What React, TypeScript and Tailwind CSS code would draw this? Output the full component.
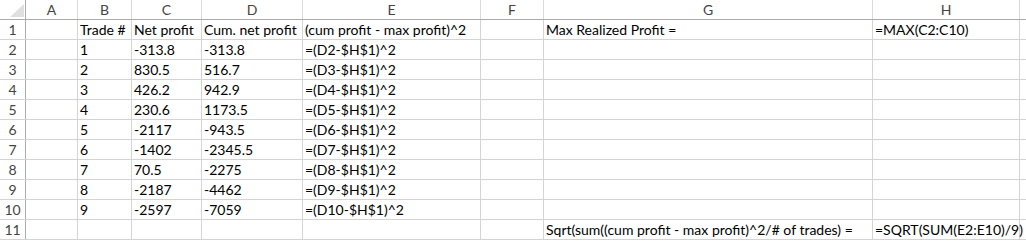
const cols = ["A", "B", "C", "D", "E", "F", "G", "H"];

// cell widths include their 1px right gridline
const widths = ["w-[52px]", "w-[54px]", "w-[70px]", "w-[101px]", "w-[178px]", "w-[63px]", "w-[329px]", "w-[147px]"];

const rows: string[][] = [
  ["", "Trade #", "Net profit", "Cum. net profit", "(cum profit - max profit)^2", "", "Max Realized Profit =", "=MAX(C2:C10)"],
  ["", "1", "-313.8", "-313.8", "=(D2-$H$1)^2", "", "", ""],
  ["", "2", "830.5", "516.7", "=(D3-$H$1)^2", "", "", ""],
  ["", "3", "426.2", "942.9", "=(D4-$H$1)^2", "", "", ""],
  ["", "4", "230.6", "1173.5", "=(D5-$H$1)^2", "", "", ""],
  ["", "5", "-2117", "-943.5", "=(D6-$H$1)^2", "", "", ""],
  ["", "6", "-1402", "-2345.5", "=(D7-$H$1)^2", "", "", ""],
  ["", "7", "70.5", "-2275", "=(D8-$H$1)^2", "", "", ""],
  ["", "8", "-2187", "-4462", "=(D9-$H$1)^2", "", "", ""],
  ["", "9", "-2597", "-7059", "=(D10-$H$1)^2", "", "", ""],
  ["", "", "", "", "", "", "Sqrt(sum((cum profit - max profit)^2/# of trades) =", "=SQRT(SUM(E2:E10)/9)"],
];

export default function App() {
  return (
    <div className="w-[1026px] h-[241px] overflow-hidden bg-white text-[14px] text-black" style={{ fontFamily: 'Lato, "Liberation Sans", Arial, sans-serif' }}>
      {/* column header */}
      <div className="flex h-[20px] border-b border-[#ababab]">
        <div className="w-[26px] shrink-0 border-r border-[#ababab] relative">
          <svg width="14" height="13" viewBox="0 0 14 13" className="absolute left-[10px] top-[4px]">
            <polygon points="14,0 14,13 0,13" fill="#dfdfdf" />
          </svg>
        </div>
        {cols.map((c, i) => (
          <div key={c} className={`${widths[i]} shrink-0 border-r border-[#dadada] flex items-center justify-center text-[#444] leading-none pt-[1px]`}>
            {c}
          </div>
        ))}
        <div className="flex-1" />
      </div>

      {rows.map((r, ri) => (
        <div key={ri} className="flex h-[20px] border-b border-[#d4d4d4]">
          <div className="w-[26px] shrink-0 border-r border-[#ababab] flex items-center justify-center text-[#444] leading-none pt-[1px]">
            {ri + 1}
          </div>
          {r.map((v, ci) => (
            <div key={ci} className={`${widths[ci]} shrink-0 border-r border-[#d4d4d4] flex items-end pb-[2px] px-[2px] whitespace-nowrap overflow-visible leading-none`}>
              {v}
            </div>
          ))}
          <div className="flex-1" />
        </div>
      ))}
    </div>
  );
}
